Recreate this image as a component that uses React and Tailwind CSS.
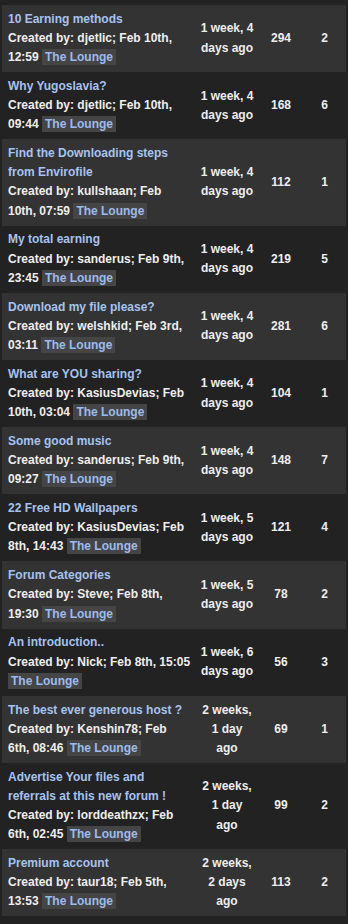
const topics = [
  { title: '10 Earning methods', by: 'djetlic', date: 'Feb 10th, 12:59', ago: '1 week, 4 days ago', views: 294, replies: 2 },
  { title: 'Why Yugoslavia?', by: 'djetlic', date: 'Feb 10th, 09:44', ago: '1 week, 4 days ago', views: 168, replies: 6 },
  { title: 'Find the Downloading steps from Envirofile', by: 'kullshaan', date: 'Feb 10th, 07:59', ago: '1 week, 4 days ago', views: 112, replies: 1 },
  { title: 'My total earning', by: 'sanderus', date: 'Feb 9th, 23:45', ago: '1 week, 4 days ago', views: 219, replies: 5 },
  { title: 'Download my file please?', by: 'welshkid', date: 'Feb 3rd, 03:11', ago: '1 week, 4 days ago', views: 281, replies: 6 },
  { title: 'What are YOU sharing?', by: 'KasiusDevias', date: 'Feb 10th, 03:04', ago: '1 week, 4 days ago', views: 104, replies: 1 },
  { title: 'Some good music', by: 'sanderus', date: 'Feb 9th, 09:27', ago: '1 week, 4 days ago', views: 148, replies: 7 },
  { title: '22 Free HD Wallpapers', by: 'KasiusDevias', date: 'Feb 8th, 14:43', ago: '1 week, 5 days ago', views: 121, replies: 4 },
  { title: 'Forum Categories', by: 'Steve', date: 'Feb 8th, 19:30', ago: '1 week, 5 days ago', views: 78, replies: 2 },
  { title: 'An introduction..', by: 'Nick', date: 'Feb 8th, 15:05', ago: '1 week, 6 days ago', views: 56, replies: 3 },
  { title: 'The best ever generous host ?', by: 'Kenshin78', date: 'Feb 6th, 08:46', ago: '2 weeks, 1 day ago', views: 69, replies: 1 },
  { title: 'Advertise Your files and referrals at this new forum !', by: 'lorddeathzx', date: 'Feb 6th, 02:45', ago: '2 weeks, 1 day ago', views: 99, replies: 2 },
  { title: 'Premium account', by: 'taur18', date: 'Feb 5th, 13:53', ago: '2 weeks, 2 days ago', views: 113, replies: 2 },
]

export default function App() {
  return (
    <div
      className="min-h-screen bg-[#222222] pt-[5px] px-[2px] pb-[7px] text-[12px] font-bold leading-[1.6] text-[#eeeeee]"
      style={{ fontFamily: '"Liberation Sans", Arial, sans-serif' }}
    >
      <table className="w-[344px] table-fixed border-collapse">
        <colgroup>
          <col className="w-[193px]" />
          <col className="w-[64px]" />
          <col className="w-[44px]" />
          <col className="w-[43px]" />
        </colgroup>
        <tbody>
          {topics.map((t, i) => (
            <tr key={t.title} className={i % 2 === 0 ? 'bg-[#333333]' : ''}>
              <td className="py-[4.8px] pl-[6px] pr-[4px] align-middle">
                <a className="block text-[#a6c3f0]">{t.title}</a>
                {`Created by: ${t.by}; ${t.date} `}
                <span className="bg-[#454545] px-[3px] py-px text-[#9cbbef]">The Lounge</span>
              </td>
              <td className="py-[4.8px] px-[5px] text-center align-middle">{t.ago}</td>
              <td className="py-[4.8px] text-center align-middle">{t.views}</td>
              <td className="py-[4.8px] text-center align-middle">{t.replies}</td>
            </tr>
          ))}
        </tbody>
      </table>
    </div>
  )
}
